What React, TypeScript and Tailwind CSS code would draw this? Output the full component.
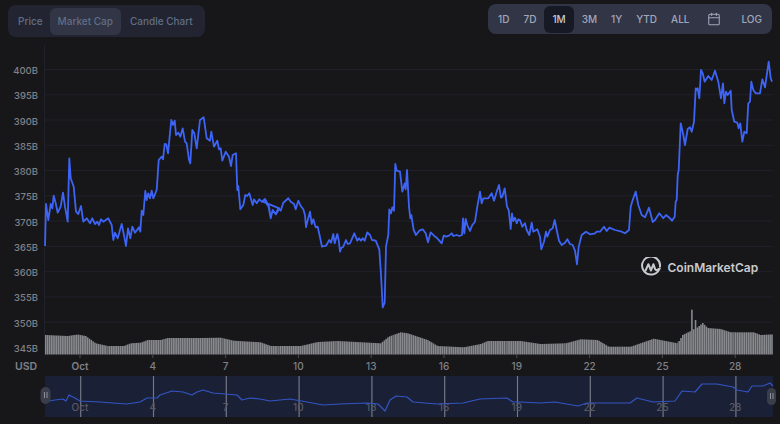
import { Calendar } from "lucide-react";

type Pt = [number, number];

// traced from the chart, in three crops: [x, y] at 3x with an origin
const crop = (ox: number, oy: number, pts: number[][]): Pt[] =>
  pts.map(([x, y]) => [ox + x / 3, oy + y / 3]);

const priceLine: Pt[] = [
  ...crop(40, 110, [
    [15, 408], [18, 282], [25, 330], [32, 282], [37, 295], [41, 257], [47, 280], [53, 308], [62, 290], [69, 248], [75, 290], [83, 335], [88, 145], [92, 205], [101, 230], [108, 305], [115, 312], [123, 288], [130, 335], [140, 325], [150, 340], [157, 325], [165, 342], [172, 335], [177, 345], [183, 328], [190, 335], [205, 325], [215, 345], [220, 390], [225, 368], [233, 385], [245, 342], [253, 380], [258, 408], [264, 355], [271, 385], [277, 350], [285, 368], [297, 352], [301, 365], [305, 302], [310, 315], [316, 243], [320, 270], [325, 250], [330, 265], [335, 242], [340, 265], [350, 240], [356, 150], [365, 140], [369, 148], [374, 102], [379, 103], [384, 130], [394, 30], [399, 45], [404, 32], [408, 75], [415, 68], [421, 80], [428, 55], [435, 95], [440, 100], [447, 150], [451, 160], [457, 60], [463, 70], [470, 115], [480, 30], [491, 22], [500, 85], [510, 92], [514, 65], [522, 110], [532, 92], [537, 118], [542, 115], [547, 152], [557, 125], [567, 140], [573, 168], [578, 135], [588, 130], [592, 240], [595, 228], [601, 298], [610, 285], [616, 255], [622, 258], [628, 250], [638, 285], [642, 268], [650, 280], [658, 268], [665, 275], [675, 267], [685, 285], [692, 325], [698, 300], [708, 313], [718, 295],
  ]),
  ...crop(260, 150, [
    [8, 155], [15, 148], [22, 165], [27, 170], [32, 205], [38, 180], [47, 193], [55, 175], [62, 182], [70, 158], [85, 145], [92, 155], [102, 162], [107, 178], [115, 152], [122, 168], [130, 178], [135, 195], [138, 232], [143, 210], [150, 185], [155, 222], [160, 208], [167, 232], [173, 230], [180, 262], [186, 290], [198, 287], [208, 270], [213, 278], [220, 252], [224, 280], [232, 252], [236, 270], [240, 305], [243, 295], [250, 290], [258, 270], [263, 282], [270, 280], [283, 250], [292, 272], [297, 265], [303, 272], [308, 265], [314, 272], [322, 247], [330, 255], [336, 270], [347, 272], [358, 298], [362, 360], [364, 390], [368, 472], [374, 458], [378, 290], [385, 255], [388, 178], [393, 190], [397, 172], [402, 182], [406, 42], [410, 62], [420, 65], [427, 125], [434, 100], [437, 118], [441, 60], [447, 170], [451, 205], [454, 195], [461, 240], [468, 255], [478, 242], [488, 238], [497, 250], [504, 277], [512, 247], [522, 257], [532, 265], [545, 280], [551, 257], [558, 260], [567, 257], [575, 250], [580, 258], [590, 255], [598, 258], [606, 255], [609, 205], [613, 250], [617, 207], [622, 225], [630, 243], [637, 225], [645, 215], [652, 170], [660, 125], [665, 160], [670, 145], [685, 145], [695, 130], [702, 152], [710, 125], [717, 105], [723, 143], [727, 140], [734, 115], [741, 170], [746, 180], [752, 237], [756, 190], [760, 213], [765, 203], [770, 220], [775, 208],
  ]),
  ...crop(500, 50, [
    [60, 510], [67, 530], [75, 520], [80, 540], [88, 555], [95, 518], [100, 545], [112, 538], [120, 560], [124, 598], [132, 575], [138, 545], [142, 560], [150, 540], [158, 535], [164, 510], [170, 540], [177, 572], [185, 585], [195, 578], [202, 568], [210, 582], [218, 585], [225, 602], [231, 643], [236, 590], [245, 555], [258, 545], [270, 553], [285, 550], [290, 545], [300, 545], [312, 530], [320, 543], [328, 533], [345, 540], [365, 545], [375, 550], [387, 540], [392, 470], [398, 450], [407, 425], [415, 465], [425, 495], [435, 502], [447, 473], [458, 516], [465, 510], [478, 490], [490, 505], [498, 495], [510, 505], [516, 512], [524, 500], [527, 455], [530, 450], [533, 375], [536, 360], [542, 220], [550, 255], [555, 285], [563, 237], [570, 232], [575, 245], [582, 215], [587, 115], [590, 120], [593, 115], [598, 145], [603, 60], [608, 70], [614, 95], [625, 78], [635, 90], [645, 62], [655, 95], [663, 145], [669, 100], [673, 160], [678, 125], [683, 135], [692, 122], [695, 180], [703, 215], [712, 218], [716, 235], [721, 220], [727, 275], [733, 245], [740, 250], [745, 160], [750, 155], [754, 95], [760, 120], [767, 130], [780, 130], [787, 88], [795, 112], [806, 35], [812, 85], [816, 95],
  ]),
];

const volumeTop: Pt[] = [
  [45, 335], [67, 336], [77, 334.5], [85, 336], [95, 343.3], [107, 346], [123, 346], [130, 343.3], [140, 342.7], [147, 340], [160, 340], [167, 338], [200, 338], [220, 337.7], [233, 340.7], [260, 342.3], [270, 346], [300, 346], [317, 342], [337, 341], [380, 343.3], [388, 336.7], [400, 332.3], [407, 333.3], [427, 340], [437, 346], [463, 347.3], [480, 344], [487, 341], [520, 341], [540, 344], [565, 343.3], [580, 339.3], [597, 340], [608, 346.7], [630, 346.7], [653, 338.7], [677, 343.3], [682, 335], [690, 331], [691, 308.5], [692, 320], [693, 330], [694.5, 318.5], [696, 328], [702, 323], [707, 328], [720, 329], [730, 332.3], [753, 332.3], [760, 335], [773, 334.3],
];

const navLine: Pt[] = [
  [49, 401], [55, 400], [63, 399], [66, 401], [69, 395], [75, 398], [80, 401], [100, 402], [113, 403], [127, 404], [140, 402], [147, 398], [157, 398], [160, 395], [172, 391], [183, 392], [192, 395], [197, 392], [203, 390], [213, 393], [225, 394], [237, 395], [242, 400], [250, 398], [260, 399], [270, 401], [290, 399], [307, 402], [323, 405], [340, 404], [367, 403], [378, 404], [385, 411], [390, 400], [396, 396], [407, 397], [413, 402], [437, 404], [463, 403], [480, 399], [507, 398], [513, 402], [520, 402], [540, 403], [555, 402], [578, 406], [587, 403], [630, 403], [637, 398], [653, 402], [675, 401], [682, 391], [695, 392], [702, 384], [717, 384], [733, 387], [737, 390], [748, 392], [752, 386], [763, 386], [770, 383], [773, 386],
];

const toPath = (pts: Pt[]) => "M" + pts.map(([x, y]) => `${x.toFixed(1)} ${y.toFixed(1)}`).join("L");

function volumeAt(x: number) {
  for (let i = 1; i < volumeTop.length; i++) {
    const [x0, y0] = volumeTop[i - 1];
    const [x1, y1] = volumeTop[i];
    if (x <= x1) return y0 + ((y1 - y0) * (x - x0)) / (x1 - x0);
  }
  return volumeTop[volumeTop.length - 1][1];
}

const volumeBars = Array.from({ length: 400 }, (_, i) => 45 + i * 1.82);
const volumeGaps = [107, 164, 223, 278, 336, 394, 448, 506, 565, 621, 678, 734];

const yLabels = ["400B", "395B", "390B", "385B", "380B", "375B", "370B", "365B", "360B", "355B", "350B", "345B"];
const xLabels = ["Oct", "4", "7", "10", "13", "16", "19", "22", "25", "28"];
const tickX = (i: number) => 80 + i * 72.8;
const gridY = (i: number) => 69.5 + i * 25.27;

function Logo() {
  return (
    <svg x="641" y="257" width="20" height="20" viewBox="0 0 20 20" fill="none" stroke="#c9cacd" strokeWidth="2" strokeLinecap="round" strokeLinejoin="round">
      <path d="M18.3 12.2A9 9 0 1 1 19 9.6" />
      <path d="M4.6 13.5L7.4 7.2L10 13.5L12.4 7.2L14.2 12.3C14.8 13.6 16.6 13.3 18.6 11.6" />
    </svg>
  );
}

function Chart() {
  return (
    <svg viewBox="0 0 780 384" width="780" height="384" className="block font-['Inter',sans-serif] font-medium">
      <g transform="translate(0 -40)">
        <line x1="44.5" y1="45" x2="44.5" y2="355" stroke="#20212a" />
        {yLabels.map((label, i) => (
          <g key={label}>
            <line x1="45" x2="773" y1={gridY(i)} y2={gridY(i)} stroke="#20212a" />
            <text x="38" y={gridY(i) + 4.5} textAnchor="end" fontSize="9.5" fill="#7f8189">
              {label}
            </text>
          </g>
        ))}
        {volumeBars.map((x) => (
          <rect key={x} x={x} y={volumeAt(x)} width="1.6" height={354.5 - volumeAt(x)} fill="#88898e" />
        ))}
        {volumeGaps.map((x) => (
          <line key={x} x1={x} x2={x} y1={volumeAt(x)} y2="354.5" stroke="#5a5b60" />
        ))}
        <path d={toPath(priceLine)} fill="none" stroke="#3d64f5" strokeWidth="1.8" strokeLinejoin="round" />
        <Logo />
        <text x="667.5" y="271.5" fontSize="12" fill="#c9cacd" fontWeight="600">
          CoinMarketCap
        </text>
        <text x="15" y="369.5" fontSize="10.5" fontWeight="600" fill="#7f8189">
          USD
        </text>
        {xLabels.map((label, i) => (
          <g key={label}>
            <line x1={tickX(i)} x2={tickX(i)} y1="355" y2="358" stroke="#4a4c55" />
            <text x={tickX(i)} y="369.5" textAnchor="middle" fontSize="10" fontWeight={i === 0 ? 600 : 500} fill="#7f8189">
              {label}
            </text>
          </g>
        ))}
        <rect x="45" y="376" width="728" height="41" fill="#1a2035" />
        {xLabels.map((label, i) => (
          <g key={label}>
            <line x1={tickX(i) + 0.7} x2={tickX(i) + 0.7} y1="376" y2="417" stroke="#747886" strokeWidth="1.2" />
            <text x={tickX(i)} y="411" textAnchor="middle" fontSize="10" fill="#565a68">
              {label}
            </text>
          </g>
        ))}
        <path d={toPath(navLine)} fill="none" stroke="#3355c4" strokeWidth="1.2" strokeLinejoin="round" />
        <g>
          <rect x="40.5" y="387" width="10" height="17" rx="5" fill="#3a3d4a" />
          <rect x="44" y="392" width="1" height="6" fill="#8d909b" />
          <rect x="46.5" y="392" width="1" height="6" fill="#8d909b" />
          <rect x="767" y="388" width="9" height="17" rx="4.5" fill="#3a3d4a" />
          <rect x="770" y="393" width="1" height="6" fill="#8d909b" />
          <rect x="772.5" y="393" width="1" height="6" fill="#8d909b" />
        </g>
      </g>
    </svg>
  );
}

export default function App() {
  const ranges = ["1D", "7D", "1M", "3M", "1Y", "YTD", "ALL"];

  return (
    <div className="h-[424px] w-[780px] overflow-hidden bg-[#17171a] font-['Inter',sans-serif]">
      <div className="flex h-10 items-start justify-between px-2 pt-1">
        <div className="mt-px flex h-8 items-center gap-px rounded-lg bg-[#222531] px-1 text-[10px] font-medium text-[#616e85]">
          <span className="px-1.5">Price</span>
          <span className="rounded-md bg-[#323546] px-2 py-1.5">Market Cap</span>
          <span className="px-2">Candle Chart</span>
        </div>
        <div className="flex h-7.5 items-center rounded-lg bg-[#323546] pl-1 pr-0.5 text-[10px] font-medium text-[#a1a7bb]">
          <div className="flex items-center gap-0.5">
            {ranges.map((r) => (
              <span key={r} className={r === "1M" ? "rounded-md bg-[#171924] px-2 py-1.5 text-[#c8cbd6]" : "px-1.5"}>
                {r}
              </span>
            ))}
          </div>
          <Calendar className="mx-3 size-3.5" strokeWidth={1.75} />
          <span className="px-2">LOG</span>
        </div>
      </div>
      <Chart />
    </div>
  );
}
